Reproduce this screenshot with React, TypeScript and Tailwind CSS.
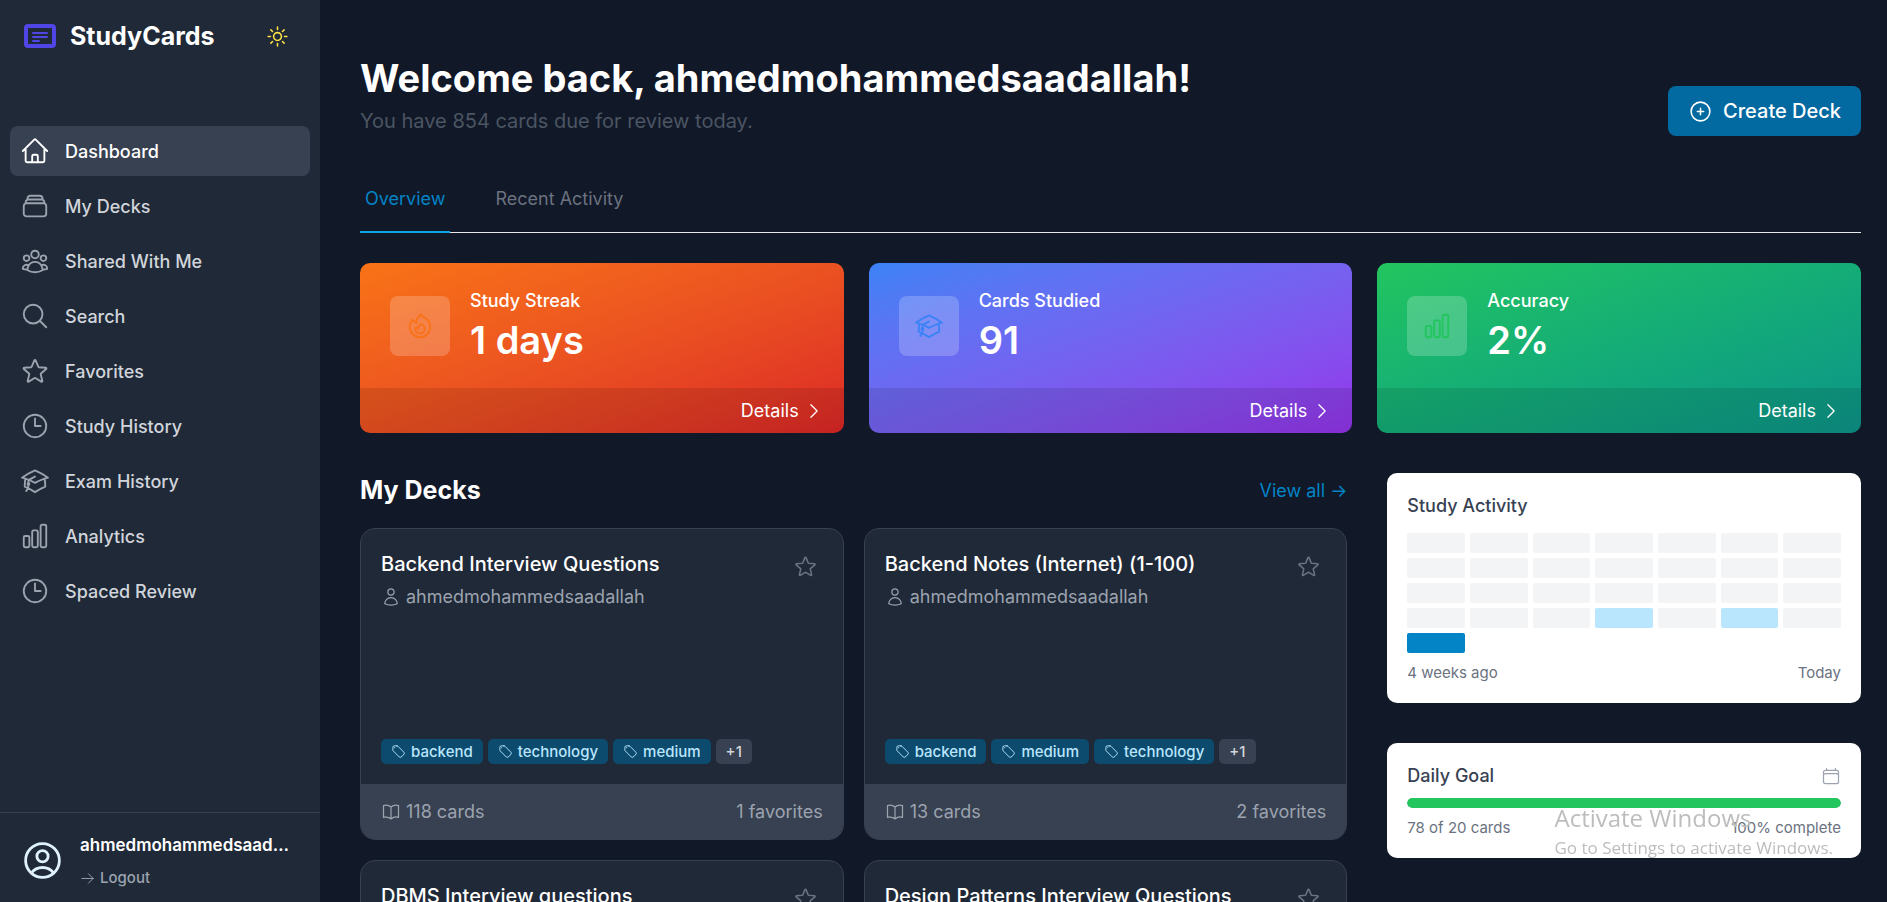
import { useState } from "react";
import type { IconType } from "react-icons";
import {
  HiOutlineAcademicCap,
  HiOutlineArrowRight,
  HiOutlineBookOpen,
  HiOutlineCalendar,
  HiOutlineChartBar,
  HiOutlineChevronRight,
  HiOutlineClock,
  HiOutlineFire,
  HiOutlineHome,
  HiOutlineMagnifyingGlass,
  HiOutlinePlusCircle,
  HiOutlineRectangleStack,
  HiOutlineStar,
  HiOutlineSun,
  HiOutlineTag,
  HiOutlineUser,
  HiOutlineUserCircle,
  HiOutlineUserGroup,
} from "react-icons/hi2";

interface Deck {
  title: string;
  author: string;
  tags: string[];
  moreTags: number;
  cards: number;
  favorites: number;
}

interface Stat {
  label: string;
  value: string;
  icon: IconType;
  gradient: string;
  iconColor: string;
}

const username = "ahmedmohammedsaadallah";

const navItems: { label: string; icon: IconType }[] = [
  { label: "Dashboard", icon: HiOutlineHome },
  { label: "My Decks", icon: HiOutlineRectangleStack },
  { label: "Shared With Me", icon: HiOutlineUserGroup },
  { label: "Search", icon: HiOutlineMagnifyingGlass },
  { label: "Favorites", icon: HiOutlineStar },
  { label: "Study History", icon: HiOutlineClock },
  { label: "Exam History", icon: HiOutlineAcademicCap },
  { label: "Analytics", icon: HiOutlineChartBar },
  { label: "Spaced Review", icon: HiOutlineClock },
];

const stats: Stat[] = [
  {
    label: "Study Streak",
    value: "1 days",
    icon: HiOutlineFire,
    gradient: "from-[#f97316] to-[#dc2626]",
    iconColor: "text-[#f97316]",
  },
  {
    label: "Cards Studied",
    value: "91",
    icon: HiOutlineAcademicCap,
    gradient: "from-[#3b82f6] to-[#9333ea]",
    iconColor: "text-[#3b82f6]",
  },
  {
    label: "Accuracy",
    value: "2%",
    icon: HiOutlineChartBar,
    gradient: "from-[#22c55e] to-[#0d9488]",
    iconColor: "text-[#22c55e]",
  },
];

const decks: Deck[] = [
  {
    title: "Backend Interview Questions",
    author: username,
    tags: ["backend", "technology", "medium"],
    moreTags: 1,
    cards: 118,
    favorites: 1,
  },
  {
    title: "Backend Notes (Internet) (1-100)",
    author: username,
    tags: ["backend", "medium", "technology"],
    moreTags: 1,
    cards: 13,
    favorites: 2,
  },
  {
    title: "DBMS Interview questions",
    author: username,
    tags: [],
    moreTags: 0,
    cards: 0,
    favorites: 0,
  },
  {
    title: "Design Patterns Interview Questions",
    author: username,
    tags: [],
    moreTags: 0,
    cards: 0,
    favorites: 0,
  },
];

// cards studied per day, oldest first
const activity = [
  0, 0, 0, 0, 0, 0, 0,
  0, 0, 0, 0, 0, 0, 0,
  0, 0, 0, 0, 0, 0, 0,
  0, 0, 0, 6, 0, 7, 0,
  78,
];

function activityColor(count: number) {
  if (count === 0) return "bg-[#f3f4f6]";
  if (count < 20) return "bg-[#bae6fd]";
  return "bg-[#0284c7]";
}

function Logo() {
  return (
    <svg width="40" height="40" viewBox="0 0 40 40" fill="none" aria-hidden="true">
      <rect x="6" y="10" width="28" height="20" rx="2" stroke="#4f46e5" strokeWidth="4" />
      <path
        d="M13 17h14M13 21h14M13 25h6"
        stroke="#4f46e5"
        strokeWidth="2"
        strokeLinecap="round"
      />
    </svg>
  );
}

function Sidebar() {
  const [active, setActive] = useState("Dashboard");

  return (
    <aside className="flex w-80 shrink-0 flex-col bg-[#1f2937]">
      <div className="flex items-center justify-between pt-4 pr-[30px] pl-5">
        <div className="flex items-center gap-[10px]">
          <Logo />
          <span className="text-[25px] leading-[35px] font-bold text-white">StudyCards</span>
        </div>
        <button type="button" aria-label="Toggle theme" className="text-[#fde047]">
          <HiOutlineSun size={25} />
        </button>
      </div>

      <nav className="mt-[70px] flex flex-1 flex-col gap-[5px] px-[10px]">
        {navItems.map(({ label, icon: Icon }) => (
          <a
            key={label}
            href="#"
            onClick={() => setActive(label)}
            className={`flex items-center gap-[15px] rounded-lg p-[10px] text-[18px] leading-[25px] font-medium ${
              active === label ? "bg-[#374151] text-white" : "text-[#d1d5db] hover:bg-[#374151]"
            }`}
          >
            <Icon size={30} className={active === label ? "text-white" : "text-[#9ca3af]"} />
            {label}
          </a>
        ))}
      </nav>

      <div className="flex items-center gap-[15px] border-t border-[#374151] pt-5 pr-[25px] pb-[14px] pl-5">
        <HiOutlineUserCircle size={45} className="shrink-0 text-[#e0f2fe]" />
        <div className="min-w-0">
          <p className="truncate text-[17px] leading-[25px] font-semibold text-white">
            {username}
          </p>
          <button
            type="button"
            className="mt-[10px] flex items-center gap-[5px] text-[15px] leading-[20px] font-medium text-[#9ca3af] hover:text-white"
          >
            <HiOutlineArrowRight size={15} />
            Logout
          </button>
        </div>
      </div>
    </aside>
  );
}

function StatCard({ stat }: { stat: Stat }) {
  const Icon = stat.icon;
  return (
    <div className={`overflow-hidden rounded-[10px] bg-gradient-to-br text-white ${stat.gradient}`}>
      <div className="flex items-center gap-5 px-[30px] py-[25px]">
        <div className="flex size-[60px] items-center justify-center rounded-lg bg-white/20">
          <Icon size={30} className={stat.iconColor} />
        </div>
        <div>
          <p className="text-[18px] leading-[25px] font-medium">{stat.label}</p>
          <p className="mt-[5px] text-[38px] leading-[45px] font-semibold">{stat.value}</p>
        </div>
      </div>
      <div className="flex justify-end bg-black/10 px-5 py-[10px]">
        <a href="#" className="flex items-center gap-[5px] text-[18px] leading-[25px]">
          Details
          <HiOutlineChevronRight size={20} />
        </a>
      </div>
    </div>
  );
}

function DeckCard({ deck }: { deck: Deck }) {
  return (
    <article className="flex min-h-[312px] flex-col overflow-hidden rounded-[15px] border border-[#374151] bg-[#1f2937]">
      <div className="flex flex-1 flex-col p-5">
        <div className="flex items-start justify-between">
          <div className="min-w-0">
            <h3 className="truncate text-[20px] leading-[30px] font-medium text-white">
              {deck.title}
            </h3>
            <p className="mt-[5px] flex items-center gap-[5px] text-[18px] leading-[25px] text-[#9ca3af]">
              <HiOutlineUser size={20} />
              {deck.author}
            </p>
          </div>
          <button
            type="button"
            aria-label={`Favorite ${deck.title}`}
            className="p-[5px] text-[#6b7280] hover:text-yellow-400"
          >
            <HiOutlineStar size={25} />
          </button>
        </div>
        <div className="mt-auto flex flex-wrap gap-[5px] text-[15px] leading-[25px] font-medium">
          {deck.tags.map((tag) => (
            <span
              key={tag}
              className="flex items-center gap-[5px] rounded-[5px] bg-[#0c4a6e] px-[10px] text-[#bae6fd]"
            >
              <HiOutlineTag size={15} />
              {tag}
            </span>
          ))}
          {deck.moreTags > 0 && (
            <span className="rounded-[5px] bg-[#374151] px-[10px] text-[#d1d5db]">
              +{deck.moreTags}
            </span>
          )}
        </div>
      </div>
      <div className="flex items-center justify-between bg-[#374151] px-5 py-[15px] text-[18px] leading-[25px] text-[#9ca3af]">
        <span className="flex items-center gap-[5px]">
          <HiOutlineBookOpen size={20} />
          {deck.cards} cards
        </span>
        <span>{deck.favorites} favorites</span>
      </div>
    </article>
  );
}

function StudyActivity() {
  return (
    <section className="rounded-[10px] bg-white p-5">
      <h3 className="text-[18px] leading-[25px] font-medium text-[#374151]">Study Activity</h3>
      <div className="mt-[15px] grid grid-cols-7 gap-[5px]">
        {activity.map((count, i) => (
          <div key={i} className={`h-5 rounded-[2px] ${activityColor(count)}`} />
        ))}
      </div>
      <div className="mt-[10px] flex justify-between text-[15px] leading-[20px] text-[#6b7280]">
        <span>4 weeks ago</span>
        <span>Today</span>
      </div>
    </section>
  );
}

function DailyGoal({ done, goal }: { done: number; goal: number }) {
  const percent = Math.min(100, Math.round((done / goal) * 100));
  return (
    <section className="rounded-[10px] bg-white p-5">
      <div className="flex items-center justify-between">
        <h3 className="text-[18px] leading-[25px] font-medium text-[#374151]">Daily Goal</h3>
        <HiOutlineCalendar size={20} className="text-[#9ca3af]" />
      </div>
      <div className="mt-[10px] h-[10px] overflow-hidden rounded-full bg-gray-200">
        <div className="h-full rounded-full bg-[#22c55e]" style={{ width: `${percent}%` }} />
      </div>
      <div className="mt-[10px] flex justify-between text-[15px] leading-[20px] text-[#6b7280]">
        <span>
          {done} of {goal} cards
        </span>
        <span>{percent}% complete</span>
      </div>
    </section>
  );
}

export default function App() {
  const [tab, setTab] = useState("Overview");

  return (
    <div className="flex h-screen overflow-hidden bg-[#111827] font-['Inter',sans-serif]">
      <Sidebar />

      <main className="min-w-0 flex-1 overflow-y-auto pt-14 pr-[26px] pb-10 pl-10 [scrollbar-width:none]">
        <header className="flex items-end justify-between">
          <div>
            <h1 className="text-[38px] leading-[45px] font-bold text-white">
              Welcome back, {username}!
            </h1>
            <p className="mt-[5px] text-[20px] leading-[30px] text-[#4b5563]">
              You have 854 cards due for review today.
            </p>
          </div>
          <button
            type="button"
            className="flex items-center gap-[10px] rounded-lg bg-[#0369a1] px-5 py-[10px] text-[20px] leading-[30px] font-medium text-white hover:bg-[#0284c7]"
          >
            <HiOutlinePlusCircle size={25} />
            Create Deck
          </button>
        </header>

        <div className="mt-[30px] flex gap-10 border-b border-[#e5e7eb]">
          {["Overview", "Recent Activity"].map((name) => (
            <button
              key={name}
              type="button"
              onClick={() => setTab(name)}
              className={`-mb-px border-b-2 px-[5px] py-5 text-[18px] leading-[25px] ${
                tab === name
                  ? "border-[#0ea5e9] text-[#0284c7]"
                  : "border-transparent text-[#6b7280]"
              }`}
            >
              {name}
            </button>
          ))}
        </div>

        <div className="mt-[30px] grid grid-cols-3 gap-[25px]">
          {stats.map((stat) => (
            <StatCard key={stat.label} stat={stat} />
          ))}
        </div>

        <div className="mt-10 grid grid-cols-3 gap-10">
          <section className="col-span-2">
            <div className="flex items-center justify-between">
              <h2 className="text-[25px] leading-[35px] font-bold text-white">My Decks</h2>
              <a href="#" className="text-[18px] leading-[25px] text-[#0284c7]">
                View all →
              </a>
            </div>
            <div className="mt-5 grid grid-cols-2 gap-5">
              {decks.map((deck) => (
                <DeckCard key={deck.title} deck={deck} />
              ))}
            </div>
          </section>

          <div className="flex flex-col gap-10">
            <StudyActivity />
            <DailyGoal done={78} goal={20} />
          </div>
        </div>
      </main>

      <div className="pointer-events-none fixed right-[54px] bottom-10 font-['Open_Sans',sans-serif] text-[#bdbdbd]">
        <p className="text-[24px] leading-[32px]">Activate Windows</p>
        <p className="text-[17px] leading-[28px]">Go to Settings to activate Windows.</p>
      </div>
    </div>
  );
}
